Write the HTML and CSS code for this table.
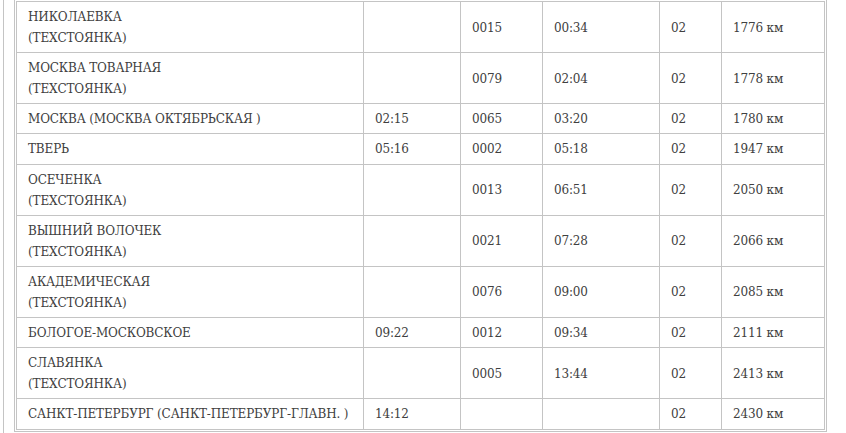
FILE: index.html
```html
<!DOCTYPE html>
<html lang="ru">
<head>
<meta charset="utf-8">
<title>Расписание</title>
<link rel="stylesheet" href="styles.css">
</head>
<body>
<div class="page">
  <div class="table-wrap">
    <table class="schedule">
      <colgroup>
        <col class="c-station">
        <col class="c-arr">
        <col class="c-stop">
        <col class="c-dep">
        <col class="c-day">
        <col class="c-dist">
      </colgroup>
      <tbody>
        <tr><td>НИКОЛАЕВКА<br>(ТЕХСТОЯНКА)</td><td></td><td>0015</td><td>00:34</td><td>02</td><td>1776 км</td></tr>
        <tr><td>МОСКВА ТОВАРНАЯ<br>(ТЕХСТОЯНКА)</td><td></td><td>0079</td><td>02:04</td><td>02</td><td>1778 км</td></tr>
        <tr><td>МОСКВА (МОСКВА ОКТЯБРЬСКАЯ )</td><td>02:15</td><td>0065</td><td>03:20</td><td>02</td><td>1780 км</td></tr>
        <tr><td>ТВЕРЬ</td><td>05:16</td><td>0002</td><td>05:18</td><td>02</td><td>1947 км</td></tr>
        <tr><td>ОСЕЧЕНКА<br>(ТЕХСТОЯНКА)</td><td></td><td>0013</td><td>06:51</td><td>02</td><td>2050 км</td></tr>
        <tr><td>ВЫШНИЙ ВОЛОЧЕК<br>(ТЕХСТОЯНКА)</td><td></td><td>0021</td><td>07:28</td><td>02</td><td>2066 км</td></tr>
        <tr><td>АКАДЕМИЧЕСКАЯ<br>(ТЕХСТОЯНКА)</td><td></td><td>0076</td><td>09:00</td><td>02</td><td>2085 км</td></tr>
        <tr><td>БОЛОГОЕ-МОСКОВСКОЕ</td><td>09:22</td><td>0012</td><td>09:34</td><td>02</td><td>2111 км</td></tr>
        <tr><td>СЛАВЯНКА<br>(ТЕХСТОЯНКА)</td><td></td><td>0005</td><td>13:44</td><td>02</td><td>2413 км</td></tr>
        <tr><td>САНКТ-ПЕТЕРБУРГ (САНКТ-ПЕТЕРБУРГ-ГЛАВН. )</td><td>14:12</td><td></td><td></td><td>02</td><td>2430 км</td></tr>
      </tbody>
    </table>
  </div>
</div>
</body>
</html>
```

FILE: styles.css
```css
html, body {
  margin: 0;
  padding: 0;
  background: #ffffff;
}

body {
  font-family: "DejaVu Serif", "Liberation Serif", serif;
  font-size: 12px;
  letter-spacing: -0.15px;
  color: #404040;
}

.page {
  margin-left: 3px;
  border-left: 1px solid #c4c4c4;
  padding-left: 10px;
  min-height: 100vh;
  box-sizing: border-box;
}

.table-wrap {
  width: 813px;
  box-sizing: border-box;
  border: 1px solid #c4c4c4;
  border-top: none;
  padding: 1px;
}

.schedule {
  width: 809px;
  table-layout: fixed;
  border-collapse: collapse;
}

.schedule td {
  border: 1px solid #c4c4c4;
  padding: 5px 10px 3px 11px;
  line-height: 21.1px;
  vertical-align: middle;
  text-align: left;
  white-space: nowrap;
}

.c-station { width: 347px; }
.c-arr { width: 97px; }
.c-stop { width: 82px; }
.c-dep { width: 117px; }
.c-day { width: 62px; }
.c-dist { width: 103px; }
```
